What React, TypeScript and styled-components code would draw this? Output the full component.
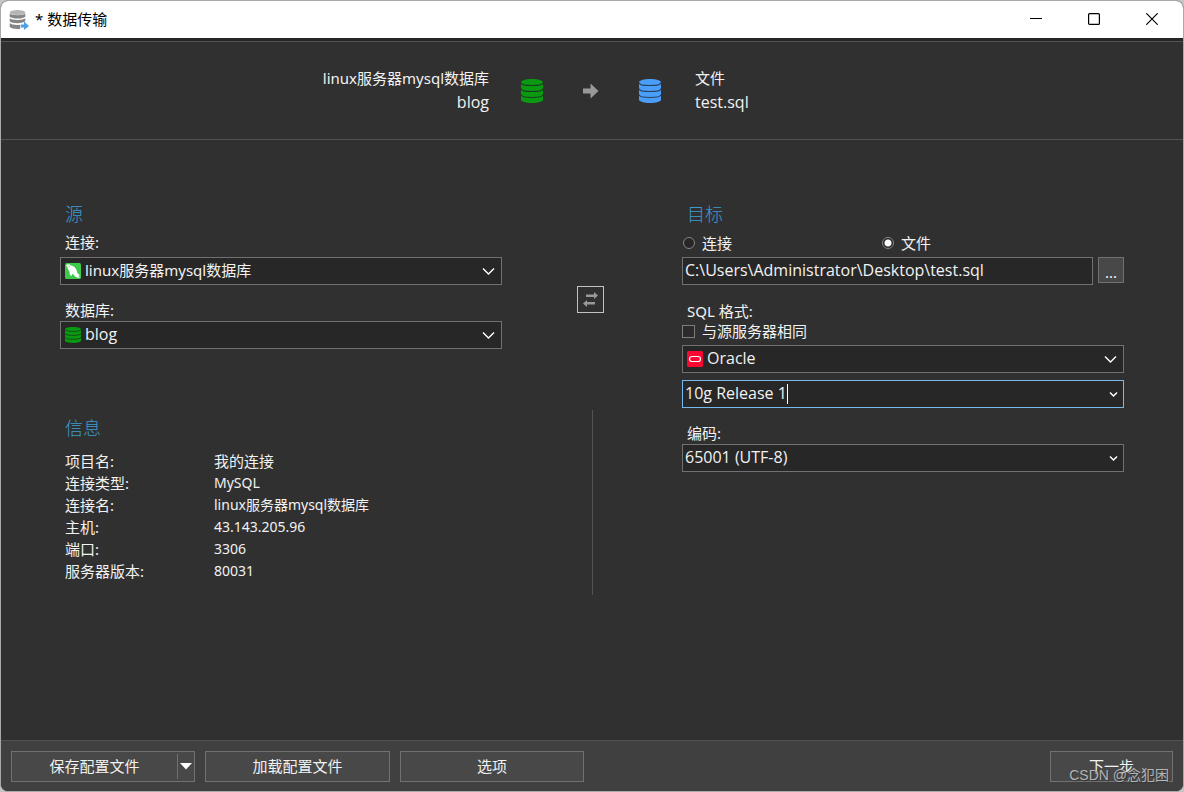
import React from "react";
import styled, { createGlobalStyle } from "styled-components";

const latin = `"Open Sans", "Noto Sans CJK SC", sans-serif`;

const GlobalStyle = createGlobalStyle`
  *, *::before, *::after { box-sizing: border-box; }
  body {
    margin: 0;
    background: #c4c4c4;
    color: #f2f2f2;
    font-family: "Noto Sans", "Noto Sans CJK SC", sans-serif;
    font-size: 15px;
    line-height: 20px;
  }
  button, input, select { font: inherit; color: inherit; margin: 0; }
`;

const Window = styled.div`
  display: flex;
  flex-direction: column;
  min-height: 100vh;
  border: 1px solid #a9a9a9;
  border-radius: 8px;
  overflow: hidden;
  background: #303030;
`;

const TitleBar = styled.header`
  display: flex;
  align-items: center;
  height: 40px;
  padding: 0 2px 0 8px;
  background: #ffffff;
  border-bottom: 3px solid #252626;
  color: #000000;
`;

const Title = styled.h1`
  flex: 1;
  margin: 0 0 0 6px;
  padding-bottom: 2px;
  font-size: 15px;
  font-weight: 400;
`;

const WindowButton = styled.button`
  display: grid;
  place-items: center;
  width: 58px;
  height: 37px;
  padding: 0 0 1px;
  border: 0;
  background: transparent;
`;

const Summary = styled.section`
  display: grid;
  grid-template-columns: 1fr auto 1fr;
  align-items: center;
  height: 99px;
  border-top: 1px solid #525252;
  border-bottom: 1px solid #525252;
  line-height: 24px;
`;

const SummaryText = styled.div<{ $align: "left" | "right" }>`
  padding-bottom: 2px;
  text-align: ${(p) => p.$align};
`;

const SummaryItem = styled.div`
  font-family: ${latin};
  font-size: 16px;
`;

const SummaryIcons = styled.div`
  display: flex;
  align-items: center;
  gap: 40px;
  padding: 0 34px 0 32px;
`;

const Content = styled.main`
  flex: 1;
  display: grid;
  grid-template-columns: 1fr 180px 1fr;
  align-items: start;
  padding: 62px 59px 40px;
`;

const Column = styled.form`
  display: flex;
  flex-direction: column;
`;

const Heading = styled.h2`
  margin: 0;
  padding-left: 5px;
  color: #3d9bd0;
  font-size: 18px;
  font-weight: 300;
  line-height: 24px;
`;

const Field = styled.div<{ $gap: number }>`
  display: flex;
  flex-direction: column;
  margin-top: ${(p) => p.$gap}px;
`;

const Label = styled.label<{ $gap?: number }>`
  padding-left: 5px;
  margin-bottom: ${(p) => p.$gap ?? 0}px;
`;

const Box = styled.div<{ $active?: boolean }>`
  display: flex;
  align-items: center;
  height: 28px;
  padding: 0 4px 0 2px;
  border: 1px solid ${(p) => (p.$active ? "#76b9ed" : "#717171")};
  background: #272727;
`;

const BoxIcon = styled.span`
  display: flex;
  margin: 0 4px 0 2px;
`;

const Select = styled.select<{ $latin?: boolean }>`
  appearance: none;
  flex: 1;
  min-width: 0;
  height: 26px;
  padding: 0 0 2px;
  border: 0;
  outline: 0;
  background: transparent;
  ${(p) => p.$latin && `font-family: ${latin}; font-size: 16px;`}
`;

const ChevronSlot = styled.span`
  display: flex;
  margin-left: auto;
  padding: 0 1px;
  pointer-events: none;
`;

const PathRow = styled.div`
  display: flex;
  align-items: flex-start;
  gap: 5px;
  margin-top: 4px;
`;

const PathInput = styled.input`
  flex: 1;
  min-width: 0;
  height: 28px;
  padding: 0 2px 2px;
  border: 1px solid #717171;
  outline: 0;
  background: #272727;
  font-family: ${latin};
  font-size: 16px;
`;

const ComboInput = styled.input`
  field-sizing: content;
  height: 26px;
  padding: 0 0 2px;
  border: 0;
  outline: 0;
  background: transparent;
  font-family: ${latin};
  font-size: 16px;
`;

const Caret = styled.span`
  width: 1px;
  height: 20px;
  background: #ffffff;
`;

const BrowseButton = styled.button`
  width: 26px;
  height: 26px;
  padding: 3px 0 0;
  border: 1px solid #717171;
  background: #484848;
`;

const RadioRow = styled.div`
  display: grid;
  grid-template-columns: 9fr 11fr;
  margin-top: 7px;
`;

const Choice = styled.label`
  display: flex;
  align-items: center;
  gap: 7px;
  padding-left: 1px;
`;

const Radio = styled.input`
  appearance: none;
  width: 12px;
  height: 12px;
  border: 1px solid #868686;
  border-radius: 50%;
  background: #272727;
  &:checked {
    background: radial-gradient(circle, #ffffff 3px, #272727 4px);
  }
`;

const CheckChoice = styled(Choice)`
  padding-left: 0;
`;

const Check = styled.input`
  appearance: none;
  width: 13px;
  height: 13px;
  border: 1px solid #7d7d7d;
  background: #2b2b2b;
`;

const Middle = styled.div`
  display: flex;
  flex-direction: column;
  align-items: center;
  gap: 97px;
  padding-top: 84px;
`;

const SwapButton = styled.button`
  display: grid;
  place-items: center;
  width: 27px;
  height: 27px;
  margin-right: 4px;
  padding: 0;
  border: 1px solid #c2c2c2;
  background: transparent;
`;

const Divider = styled.div`
  width: 1px;
  height: 185px;
  background: #525252;
`;

const Info = styled.section`
  margin-top: 67px;
`;

const InfoList = styled.dl`
  display: grid;
  grid-template-columns: 149px 1fr;
  margin: 10px 0 0;
  padding-left: 5px;
  line-height: 22px;
`;

const InfoName = styled.dt`
  margin: 0;
`;

const InfoValue = styled.dd<{ $compact: boolean }>`
  margin: 0;
  font-size: ${(p) => (p.$compact ? 14 : 15)}px;
`;

const Footer = styled.footer`
  position: relative;
  display: flex;
  gap: 10px;
  height: 51px;
  padding: 10px;
  border-top: 1px solid #525252;
  background: #404040;
`;

const FooterButton = styled.button<{ $width: number }>`
  width: ${(p) => p.$width}px;
  height: 31px;
  padding: 0 0 2px;
  border: 1px solid #717171;
  background: #484848;
`;

const SplitButton = styled.div`
  display: flex;
  align-items: center;
  width: 184px;
  height: 31px;
  border: 1px solid #717171;
  background: #484848;
`;

const SplitMain = styled.button`
  flex: 1;
  height: 25px;
  padding: 0 0 2px;
  border: 0;
  border-right: 1px solid #717171;
  background: transparent;
`;

const SplitArrow = styled.button`
  display: grid;
  place-items: center;
  width: 16px;
  height: 25px;
  padding: 0;
  border: 0;
  background: transparent;
`;

const Spacer = styled.div`
  flex: 1;
`;

const Watermark = styled.span`
  position: absolute;
  right: 14px;
  bottom: 6px;
  color: #b4b4b4;
  font-family: "Liberation Sans", "Noto Sans CJK SC", sans-serif;
  font-size: 14px;
  text-shadow: 1px 1px 1px #333333;
  pointer-events: none;
`;

function Database({ color, line, width, height }: { color: string; line: string; width: number; height: number }) {
  return (
    <svg width={width} height={height} viewBox="0 0 21 24" preserveAspectRatio="none" aria-hidden="true">
      <path d="M0 3.200C0 1.400 4.700 0 10.500 0S21 1.400 21 3.200v17.600c0 1.800-4.700 3.200-10.500 3.200S0 22.600 0 20.800z" fill={color} />
      <path
        d="M0 3.600c0 1.800 4.700 3 10.500 3s10.500-1.200 10.500-3M0 9.600c0 1.800 4.700 3 10.500 3s10.500-1.200 10.500-3M0 15.400c0 1.800 4.700 3 10.500 3s10.500-1.200 10.500-3"
        fill="none"
        stroke={line}
        strokeWidth="1"
      />
    </svg>
  );
}

function TransferLogo() {
  return (
    <svg width="20" height="20" viewBox="0 0 20 20" aria-hidden="true">
      <ellipse cx="8.500" cy="2.500" rx="7.800" ry="2.500" fill="#b5b5b5" />
      <path d="M.7 3.600C3 5.800 14 5.800 16.300 3.600v3.200C14 9.200 3 9.200.7 6.800z" fill="#858585" />
      <path d="M.7 8.300C3 10.600 14 10.600 16.300 8.300v3c-3 2.500-12.600 2.500-15.600.200z" fill="#858585" />
      <path d="M.7 13c2.300 2 7 2.300 10.600 1.700v4.100C7 19.300 2.500 18.700.7 17z" fill="#858585" />
      <path d="M12 14.500h3v-3l5 4.500-5 4v-2.500h-3z" fill="#4aa0ea" />
    </svg>
  );
}

function MySqlLogo() {
  return (
    <svg width="16" height="16" viewBox="0 0 16 16" aria-hidden="true">
      <rect width="16" height="16" rx="1.500" fill="#3fc94b" />
      <path
        d="M1.200 1.900C2.600.8 4.600 1.300 5.800 2.400c2.900.3 5 2.100 5.800 4.800.4 1.500.6 2.600 1.400 3.600l2 1.500-1.600.4 1.600 2.300c-2.100-.1-4.300-.6-5.500-2.200L7.600 10.600l-1 2.500c-1.500-.7-2.300-2.500-2-4.200C3.300 7.200 2.900 5.700 2.500 4.600 2.200 3.600 1.200 2.900 1.200 1.900z"
        fill="#ffffff"
      />
      <circle cx="4.200" cy="3.600" r=".6" fill="#3fc94b" />
    </svg>
  );
}

function OracleLogo() {
  return (
    <svg width="16" height="16" viewBox="0 0 16 16" aria-hidden="true">
      <rect width="16" height="16" rx="1.500" fill="#fb0731" />
      <rect x="2.500" y="5.500" width="11" height="5" rx="2.500" fill="none" stroke="#ffffff" strokeWidth="1.200" />
    </svg>
  );
}

function Chevron({ small }: { small?: boolean }) {
  return (
    <ChevronSlot>
      {small ? (
        <svg width="9" height="7" viewBox="0 0 9 7" aria-hidden="true">
          <path d="M1 1.500L4.500 5 8 1.500" fill="none" stroke="#ffffff" strokeWidth="1.500" />
        </svg>
      ) : (
        <svg width="15" height="9" viewBox="0 0 15 9" aria-hidden="true">
          <path d="M2 1.500l5.500 5.500L13 1.500" fill="none" stroke="#ffffff" strokeWidth="1.400" />
        </svg>
      )}
    </ChevronSlot>
  );
}

const info: { name: string; value: string; compact: boolean }[] = [
  { name: "项目名:", value: "我的连接", compact: false },
  { name: "连接类型:", value: "MySQL", compact: true },
  { name: "连接名:", value: "linux服务器mysql数据库", compact: true },
  { name: "主机:", value: "43.143.205.96", compact: true },
  { name: "端口:", value: "3306", compact: true },
  { name: "服务器版本:", value: "80031", compact: true },
];

export default function App() {
  return (
    <>
      <GlobalStyle />
      <Window>
        <TitleBar>
          <TransferLogo />
          <Title>* 数据传输</Title>
          <WindowButton type="button" aria-label="最小化">
            <svg width="12" height="12" viewBox="0 0 12 12"><path d="M0 5.500h12" stroke="#000" /></svg>
          </WindowButton>
          <WindowButton type="button" aria-label="最大化">
            <svg width="12" height="12" viewBox="0 0 12 12"><rect x=".6" y=".6" width="10.800" height="10.800" rx="1" fill="none" stroke="#000" strokeWidth="1.200" /></svg>
          </WindowButton>
          <WindowButton type="button" aria-label="关闭">
            <svg width="12" height="12" viewBox="0 0 12 12"><path d="M.3.3l11.400 11.400M11.700.3L.3 11.700" stroke="#000" strokeWidth="1.200" /></svg>
          </WindowButton>
        </TitleBar>

        <Summary>
          <SummaryText $align="right">
            <div>linux服务器mysql数据库</div>
            <SummaryItem>blog</SummaryItem>
          </SummaryText>
          <SummaryIcons>
            <Database color="#0a9a12" line="#1d3a1e" width={22} height={24} />
            <svg width="16" height="16" viewBox="0 0 16 16" aria-hidden="true">
              <path d="M0 5.500h7.500V.5L15.500 8l-8 7.500v-5H0z" fill="#999999" />
            </svg>
            <Database color="#4a9df8" line="#26405e" width={22} height={24} />
          </SummaryIcons>
          <SummaryText $align="left">
            <div>文件</div>
            <SummaryItem>test.sql</SummaryItem>
          </SummaryText>
        </Summary>

        <Content>
          <Column>
            <Heading>源</Heading>
            <Field $gap={6}>
              <Label htmlFor="connection" $gap={5}>连接:</Label>
              <Box>
                <BoxIcon><MySqlLogo /></BoxIcon>
                <Select id="connection"><option>linux服务器mysql数据库</option></Select>
                <Chevron />
              </Box>
            </Field>
            <Field $gap={15}>
              <Label htmlFor="database" $gap={1}>数据库:</Label>
              <Box>
                <BoxIcon><Database color="#0a9a12" line="#182c19" width={16} height={16} /></BoxIcon>
                <Select id="database" $latin><option>blog</option></Select>
                <Chevron />
              </Box>
            </Field>
            <Info>
              <Heading>信息</Heading>
              <InfoList>
                {info.map((row) => (
                  <React.Fragment key={row.name}>
                    <InfoName>{row.name}</InfoName>
                    <InfoValue $compact={row.compact}>{row.value}</InfoValue>
                  </React.Fragment>
                ))}
              </InfoList>
            </Info>
          </Column>

          <Middle>
            <SwapButton type="button" aria-label="交换">
              <svg width="15" height="15" viewBox="0 0 15 15" aria-hidden="true">
                <path d="M3 2.500h8V0l4 3.500L11 7V5H3zM12 10H4V8L0 11.500 4 15v-2.500h8z" fill="#999999" />
              </svg>
            </SwapButton>
            <Divider />
          </Middle>

          <Column>
            <Heading>目标</Heading>
            <RadioRow>
              <Choice><Radio type="radio" name="target" />连接</Choice>
              <Choice><Radio type="radio" name="target" defaultChecked />文件</Choice>
            </RadioRow>
            <PathRow>
              <PathInput type="text" aria-label="文件" defaultValue="C:\Users\Administrator\Desktop\test.sql" />
              <BrowseButton type="button" aria-label="浏览">...</BrowseButton>
            </PathRow>
            <Field $gap={16}>
              <Label htmlFor="format">SQL 格式:</Label>
              <CheckChoice><Check type="checkbox" />与源服务器相同</CheckChoice>
            </Field>
            <Field $gap={4}>
              <Box>
                <BoxIcon><OracleLogo /></BoxIcon>
                <Select id="format" $latin><option>Oracle</option></Select>
                <Chevron />
              </Box>
            </Field>
            <Field $gap={7}>
              <Box $active>
                <ComboInput type="text" aria-label="版本" defaultValue="10g Release 1" />
                <Caret />
                <Chevron small />
              </Box>
            </Field>
            <Field $gap={15}>
              <Label htmlFor="encoding" $gap={1}>编码:</Label>
              <Box>
                <Select id="encoding" $latin><option>65001 (UTF-8)</option></Select>
                <Chevron small />
              </Box>
            </Field>
          </Column>
        </Content>

        <Footer>
          <SplitButton>
            <SplitMain type="button">保存配置文件</SplitMain>
            <SplitArrow type="button" aria-label="更多">
              <svg width="12" height="7" viewBox="0 0 12 7"><path d="M0 0h12L6 6.500z" fill="#ffffff" /></svg>
            </SplitArrow>
          </SplitButton>
          <FooterButton type="button" $width={185}>加载配置文件</FooterButton>
          <FooterButton type="button" $width={184}>选项</FooterButton>
          <Spacer />
          <FooterButton type="button" $width={123}>下一步</FooterButton>
          <Watermark>CSDN @念犯困</Watermark>
        </Footer>
      </Window>
    </>
  );
}
